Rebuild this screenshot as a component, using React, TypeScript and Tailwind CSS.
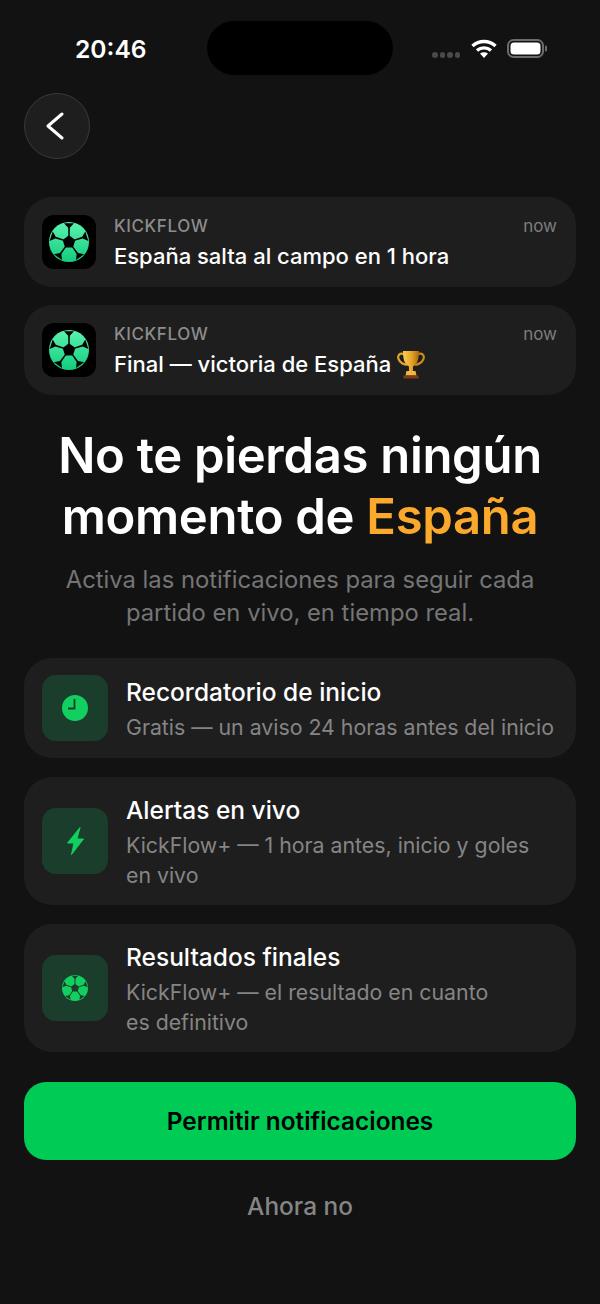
const font = { fontFamily: 'Inter, sans-serif' };

function Ball({ id, from, to, hole, className }: { id: string; from: string; to: string; hole: string; className: string }) {
  const angles = [0, 72, 144, 216, 288];
  return (
    <svg viewBox="0 0 48 48" className={className}>
      <defs>
        <linearGradient id={id} x1="0" y1="0" x2="0" y2="1">
          <stop offset="0" stopColor={from} />
          <stop offset="1" stopColor={to} />
        </linearGradient>
      </defs>
      <circle cx="24" cy="24" r="24" fill={`url(#${id})`} />
      <polygon points="24,16 31.6,21.5 28.7,30.5 19.3,30.5 16.4,21.5" fill={hole} />
      {angles.map((a) => (
        <g key={a} transform={`rotate(${a} 24 24)`} fill={hole}>
          <polygon points="18,1.5 30,1.5 25,7 24.8,17 23.2,17 23,7" />
        </g>
      ))}
    </svg>
  );
}

function Trophy() {
  return (
    <svg viewBox="0 0 28 29" className="h-[29px] w-[28px]">
      <defs>
        <linearGradient id="cup" x1="0" y1="0" x2="1" y2="0">
          <stop offset="0" stopColor="#f8cf55" />
          <stop offset="0.55" stopColor="#e5a423" />
          <stop offset="1" stopColor="#a9690f" />
        </linearGradient>
      </defs>
      <path d="M7 4C2.500 2.500 0 5.500 1.800 9.500c1.200 2.700 4.500 4.800 8 5.300" fill="none" stroke="#e0a32a" strokeWidth="2.200" />
      <path d="M21 4c4.500-1.500 7 1.500 5.200 5.500-1.200 2.700-4.500 4.800-8 5.300" fill="none" stroke="#c98a1c" strokeWidth="2.200" />
      <path d="M6 1h16c0 7-1 13-6 15.500V21h-4v-4.500C7 14 6 8 6 1z" fill="url(#cup)" />
      <path d="M9.500 21h9l1 4.500h-11z" fill="#eeb648" />
      <rect x="6.500" y="25.500" width="15" height="3" fill="#7d3d10" />
    </svg>
  );
}

function Notice({ text, trophy }: { text: string; trophy?: boolean }) {
  return (
    <div className="flex h-[90px] items-center gap-[18px] rounded-[28px] bg-[#1e1e1e] pl-[18px] pr-[19px]">
      <div className="flex h-[54px] w-[54px] shrink-0 items-center justify-center rounded-xl bg-black">
        <Ball id={trophy ? 'ball-b' : 'ball-a'} from="#5cf2b0" to="#12cc7c" hole="#000000" className="h-10 w-10" />
      </div>
      <div className="min-w-0 flex-1 pt-[2px] pb-[1px]">
        <div className="flex items-center justify-between">
          <span className="text-[17px] leading-[24px] font-medium tracking-[0.6px] text-[#8c8c8c]">KICKFLOW</span>
          <span className="text-[17px] leading-[24px] text-[#7d7d7d]">now</span>
        </div>
        <div className="mt-[3px] flex items-center gap-[6px] text-[22px] leading-[30px] font-medium text-white">
          {text}
          {trophy && <Trophy />}
        </div>
      </div>
    </div>
  );
}

function Feature({ title, lines, icon, height }: { title: string; lines: string[]; icon: React.ReactNode; height: string }) {
  return (
    <div className={`flex ${height} items-center gap-[18px] rounded-[28px] bg-[#1e1e1e] pl-[18px]`}>
      <div className="flex h-[66px] w-[66px] shrink-0 items-center justify-center rounded-[14px] bg-[#1b3d2b]">{icon}</div>
      <div className="pt-[2px]">
        <div className="text-[24.5px] leading-[30px] font-medium text-white">{title}</div>
        <div className="mt-[5px] text-[21.3px] leading-[30px] text-[#858585]">
          {lines.map((l) => (
            <div key={l} className="whitespace-nowrap">{l}</div>
          ))}
        </div>
      </div>
    </div>
  );
}

export default function App() {
  return (
    <div className="h-[1304px] w-[600px] overflow-hidden bg-[#121212] px-6" style={font}>
      <div className="flex h-[93px] items-start justify-between pt-[21px]">
        <div className="w-[183px] pl-[51px] pt-[11px] text-[24.6px] leading-[34px] font-semibold text-white">20:46</div>
        <div className="h-[54px] w-[186px] rounded-[27px] bg-black" />
        <div className="flex w-[183px] items-start justify-end gap-[10px] pr-[29px] pt-[18px]">
          <div className="mt-[13px] mr-[1px] flex gap-[2px]">
            {[0, 1, 2, 3].map((i) => (
              <div key={i} className="h-[5.5px] w-[5.5px] rounded-full bg-[#4a4a4a]" />
            ))}
          </div>
          <svg viewBox="0 0 26 19" className="h-[19px] w-[26px]" fill="none" stroke="#fff" strokeWidth="3.4">
            <path d="M1.500 7C8 1 18 1 24.500 7" />
            <path d="M6 11.500C10 8 16 8 20 11.500" />
            <path d="M13 19l-4-4.400c2.400-1.700 5.600-1.700 8 0z" fill="#fff" stroke="none" />
          </svg>
          <svg viewBox="0 0 40 19" className="h-[19px] w-[40px]">
            <rect x="1" y="1" width="35" height="17" rx="5.500" fill="none" stroke="#6b6b6b" strokeWidth="2" />
            <rect x="3.500" y="3.500" width="30" height="12" rx="3.500" fill="#fff" />
            <rect x="38" y="6.500" width="2" height="6" rx="1" fill="#6b6b6b" />
          </svg>
        </div>
      </div>

      <div className="flex h-[66px] w-[66px] items-center justify-center rounded-full border border-[#3a3a3a] bg-[#1e1e1e] pr-[5px]">
        <svg viewBox="0 0 18 28" className="h-[28px] w-[18px]" fill="none" stroke="#fff" strokeWidth="3" strokeLinecap="round" strokeLinejoin="round">
          <path d="M16 2L2 14l14 12" />
        </svg>
      </div>

      <div className="mt-[38px] flex flex-col gap-[18px]">
        <Notice text="España salta al campo en 1 hora" />
        <Notice text="Final — victoria de España" trophy />
      </div>

      <h1 className="mt-[30px] text-center text-[49px] leading-[61px] font-semibold tracking-[-0.3px] text-white">
        No te pierdas ningún
        <br />
        momento de <span className="text-[#fba92d]">España</span>
      </h1>
      <p className="mt-[16px] text-center text-[23.8px] leading-[33px] text-[#757575]">
        Activa las notificaciones para seguir cada
        <br />
        partido en vivo, en tiempo real.
      </p>

      <div className="mt-[29px] flex flex-col gap-[19px]">
        <Feature
          height="h-[100px]"
          title="Recordatorio de inicio"
          lines={['Gratis — un aviso 24 horas antes del inicio']}
          icon={
            <svg viewBox="0 0 26 26" className="h-[26px] w-[26px]">
              <circle cx="13" cy="13" r="13" fill="#12d05f" />
              <path d="M12.500 4v9.500H6" fill="none" stroke="#1b3d2b" strokeWidth="1.800" />
            </svg>
          }
        />
        <Feature
          height="h-[128px]"
          title="Alertas en vivo"
          lines={['KickFlow+ — 1 hora antes, inicio y goles', 'en vivo']}
          icon={
            <svg viewBox="0 0 17 28" className="h-[28px] w-[17px]">
              <path d="M13 .5L.5 16H7L4.500 27.500 16.500 12H10z" fill="#12d05f" stroke="#12d05f" strokeWidth="1" strokeLinejoin="round" />
            </svg>
          }
        />
        <Feature
          height="h-[128px]"
          title="Resultados finales"
          lines={['KickFlow+ — el resultado en cuanto', 'es definitivo']}
          icon={<Ball id="ball-c" from="#12d05f" to="#12d05f" hole="#1b3d2b" className="h-[26px] w-[26px]" />}
        />
      </div>

      <button className="mt-[30px] h-[78px] w-full rounded-[22px] bg-[#00cc55] text-[24.4px] font-semibold text-black">
        Permitir notificaciones
      </button>
      <div className="mt-[29px] text-center text-[24.4px] leading-[34px] font-medium text-[#858585]">Ahora no</div>
    </div>
  );
}
